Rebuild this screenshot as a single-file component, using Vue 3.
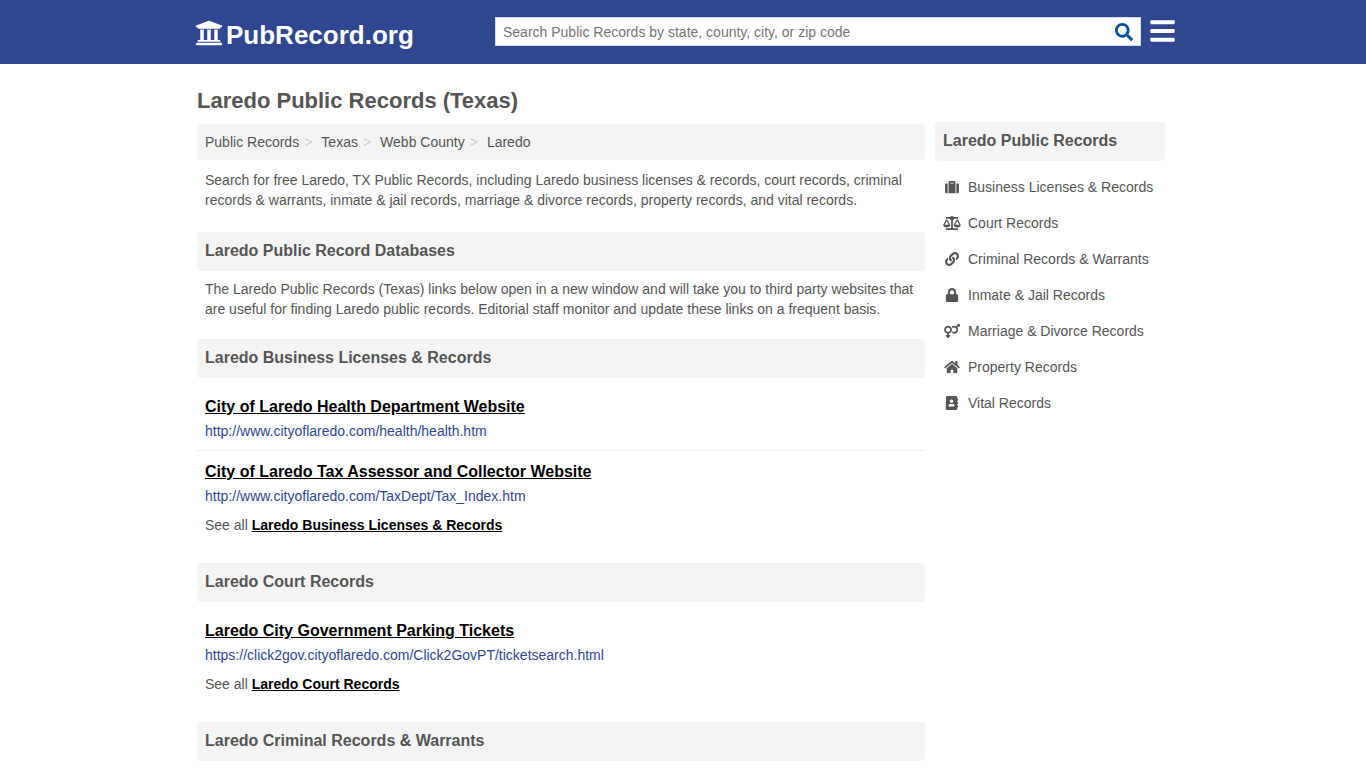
<script setup>
const crumbs = ['Public Records', 'Texas', 'Webb County', 'Laredo']

const sections = [
  {
    title: 'Laredo Business Licenses & Records',
    items: [
      { name: 'City of Laredo Health Department Website', url: 'http://www.cityoflaredo.com/health/health.htm' },
      { name: 'City of Laredo Tax Assessor and Collector Website', url: 'http://www.cityoflaredo.com/TaxDept/Tax_Index.htm' },
    ],
  },
  {
    title: 'Laredo Court Records',
    items: [
      { name: 'Laredo City Government Parking Tickets', url: 'https://click2gov.cityoflaredo.com/Click2GovPT/ticketsearch.html' },
    ],
  },
]

const categories = [
  {
    label: 'Business Licenses & Records',
    w: 512,
    d: 'M128 480h256V80c0-26.5-21.5-48-48-48H176c-26.5 0-48 21.5-48 48v400zm64-384h128v32H192V96zm320 80v256c0 26.5-21.5 48-48 48h-48V128h48c26.5 0 48 21.5 48 48zM96 480H48c-26.5 0-48-21.5-48-48V176c0-26.5 21.5-48 48-48h48v352z',
  },
  {
    label: 'Court Records',
    w: 640,
    d: 'M256 336h-.02c0-16.18 1.34-8.73-85.05-181.51-17.65-35.29-68.19-35.36-85.87 0C-2.06 328.75.02 320.33.02 336H0c0 44.18 57.31 80 128 80s128-35.82 128-80zM128 176l72 144H56l72-144zm511.98 160c0-16.18 1.34-8.73-85.05-181.51-17.65-35.29-68.19-35.36-85.87 0-87.12 174.26-85.04 165.84-85.04 181.51H384c0 44.18 57.31 80 128 80s128-35.82 128-80h-.02zM440 320l72-144 72 144H440zm88 128H352V153.25c23.51-10.29 41.16-31.48 46.39-57.25H528c8.84 0 16-7.16 16-16V48c0-8.84-7.16-16-16-16H383.64C369.04 12.68 346.09 0 320 0s-49.04 12.68-63.64 32H112c-8.84 0-16 7.16-16 16v32c0 8.84 7.16 16 16 16h129.61c5.23 25.76 22.87 46.96 46.39 57.25V448H112c-8.84 0-16 7.16-16 16v32c0 8.84 7.16 16 16 16h416c8.84 0 16-7.16 16-16v-32c0-8.84-7.16-16-16-16z',
  },
  {
    label: 'Criminal Records & Warrants',
    w: 512,
    d: 'M326.612 185.391c59.747 59.809 58.927 155.698.36 214.59-.11.12-.24.25-.36.37l-67.2 67.2c-59.27 59.27-155.699 59.262-214.96 0-59.27-59.26-59.27-155.7 0-214.96l37.106-37.106c9.84-9.84 26.786-3.3 27.294 10.606.648 17.722 3.826 35.527 9.69 52.721 1.986 5.822.567 12.262-3.783 16.612l-13.087 13.087c-28.026 28.026-28.905 73.66-1.155 101.96 28.024 28.579 74.086 28.749 102.325.51l67.2-67.19c28.191-28.191 28.073-73.757 0-101.83-3.701-3.694-7.429-6.564-10.341-8.569a16.037 16.037 0 0 1-6.947-12.606c-.396-10.567 3.348-21.456 11.698-29.806l21.054-21.055c5.521-5.521 14.182-6.199 20.584-1.731a152.482 152.482 0 0 1 20.522 17.197zM467.547 44.449c-59.261-59.262-155.69-59.27-214.96 0l-67.2 67.2c-.12.12-.25.25-.36.37-58.566 58.892-59.387 154.781.36 214.59a152.454 152.454 0 0 0 20.521 17.196c6.402 4.468 15.064 3.789 20.584-1.731l21.054-21.055c8.35-8.35 12.094-19.239 11.698-29.806a16.037 16.037 0 0 0-6.947-12.606c-2.912-2.005-6.64-4.875-10.341-8.569-28.073-28.073-28.191-73.639 0-101.83l67.2-67.19c28.239-28.239 74.3-28.069 102.325.51 27.75 28.3 26.872 73.934-1.155 101.96l-13.087 13.087c-4.35 4.35-5.769 10.79-3.783 16.612 5.864 17.194 9.042 34.999 9.69 52.721.509 13.906 17.454 20.446 27.294 10.606l37.106-37.106c59.271-59.259 59.271-155.699.001-214.959z',
  },
  {
    label: 'Inmate & Jail Records',
    w: 448,
    d: 'M400 224h-24v-72C376 68.2 307.8 0 224 0S72 68.2 72 152v72H48c-26.5 0-48 21.5-48 48v192c0 26.5 21.5 48 48 48h352c26.5 0 48-21.5 48-48V272c0-26.5-21.5-48-48-48zm-104 0H152v-72c0-39.7 32.3-72 72-72s72 32.3 72 72v72z',
  },
  {
    label: 'Marriage & Divorce Records',
    w: 576,
    d: 'M564 0h-79c-10.7 0-16 12.9-8.5 20.5l16.9 16.9-48.7 48.7C422.5 72.1 396.2 64 368 64c-33.7 0-64.6 11.6-89.2 30.9 14 16.7 25 36 32.1 57.1 14.5-14.8 34.7-24 57.1-24 44.1 0 80 35.9 80 80s-35.9 80-80 80c-22.3 0-42.6-9.2-57.1-24-7.1 21.1-18 40.4-32.1 57.1 24.5 19.4 55.5 30.9 89.2 30.9 79.5 0 144-64.5 144-144 0-28.2-8.1-54.5-22.1-76.7l48.7-48.7 16.9 16.9c2.4 2.4 5.4 3.5 8.4 3.5 6.2 0 12.1-4.8 12.1-12V12c0-6.6-5.4-12-12-12zM144 64C64.5 64 0 128.5 0 208c0 68.5 47.9 125.9 112 140.4V400H76c-6.6 0-12 5.4-12 12v40c0 6.6 5.4 12 12 12h36v36c0 6.6 5.4 12 12 12h40c6.6 0 12-5.4 12-12v-36h36c6.6 0 12-5.4 12-12v-40c0-6.6-5.4-12-12-12h-36v-51.6c64.1-14.6 112-71.9 112-140.4 0-79.5-64.5-144-144-144zm0 224c-44.1 0-80-35.9-80-80s35.9-80 80-80 80 35.9 80 80-35.9 80-80 80z',
  },
  {
    label: 'Property Records',
    w: 576,
    d: 'M280.37 148.26L96 300.11V464a16 16 0 0 0 16 16l112.06-.29a16 16 0 0 0 15.92-16V368a16 16 0 0 1 16-16h64a16 16 0 0 1 16 16v95.64a16 16 0 0 0 16 16.05L464 480a16 16 0 0 0 16-16V300L295.67 148.26a12.19 12.19 0 0 0-15.3 0zM571.6 251.47L488 182.56V44.05a12 12 0 0 0-12-12h-56a12 12 0 0 0-12 12v72.61L318.47 43a48 48 0 0 0-61 0L4.34 251.47a12 12 0 0 0-1.6 16.9l25.5 31A12 12 0 0 0 45.15 301l235.22-193.74a12.19 12.19 0 0 1 15.3 0L530.9 301a12 12 0 0 0 16.9-1.6l25.5-31a12 12 0 0 0-1.7-16.93z',
  },
  {
    label: 'Vital Records',
    w: 448,
    d: 'M436 160c6.6 0 12-5.4 12-12v-40c0-6.6-5.4-12-12-12h-20V48c0-26.5-21.5-48-48-48H48C21.5 0 0 21.5 0 48v416c0 26.5 21.5 48 48 48h320c26.5 0 48-21.5 48-48v-48h20c6.6 0 12-5.4 12-12v-40c0-6.6-5.4-12-12-12h-20v-64h20c6.6 0 12-5.4 12-12v-40c0-6.6-5.4-12-12-12h-20v-64h20zm-228-32c35.3 0 64 28.7 64 64s-28.7 64-64 64-64-28.7-64-64 28.7-64 64-64zm112 236.8c0 10.6-10 19.2-22.4 19.2H118.4C106 384 96 375.4 96 364.8v-19.2c0-31.8 30.1-57.6 67.2-57.6h5c12.3 5.1 25.7 8 39.8 8s27.6-2.9 39.8-8h5c37.1 0 67.2 25.8 67.2 57.6v19.2z',
  },
]
</script>

<template>
  <div class="page">
    <header class="site-header">
      <div class="header-inner">
        <a class="logo" href="#">
          <svg class="logo-icon" viewBox="0 0 512 512" aria-hidden="true">
            <path d="M496 128v16a8 8 0 0 1-8 8h-24v12c0 6.627-5.373 12-12 12H60c-6.627 0-12-5.373-12-12v-12H24a8 8 0 0 1-8-8v-16a8 8 0 0 1 4.941-7.392l232-88a7.996 7.996 0 0 1 6.118 0l232 88A8 8 0 0 1 496 128zm-24 304H40c-13.255 0-24 10.745-24 24v16a8 8 0 0 0 8 8h464a8 8 0 0 0 8-8v-16c0-13.255-10.745-24-24-24zM96 192v192H60c-6.627 0-12 5.373-12 12v20h416v-20c0-6.627-5.373-12-12-12h-36V192h-64v192h-64V192h-64v192h-64V192H96z" />
          </svg>
          <span>PubRecord.org</span>
        </a>
        <form class="search" role="search" @submit.prevent>
          <input type="text" aria-label="Search Public Records" placeholder="Search Public Records by state, county, city, or zip code" />
          <button type="submit" aria-label="Search">
            <svg viewBox="0 0 512 512" aria-hidden="true">
              <path d="M505 442.7L405.3 343c-4.5-4.5-10.6-7-17-7H372c27.6-35.3 44-79.7 44-128C416 93.1 322.9 0 208 0S0 93.1 0 208s93.1 208 208 208c48.3 0 92.7-16.4 128-44v16.3c0 6.4 2.5 12.5 7 17l99.7 99.7c9.4 9.4 24.6 9.4 33.9 0l28.3-28.3c9.4-9.4 9.4-24.6.1-34zM208 336c-70.7 0-128-57.2-128-128 0-70.7 57.2-128 128-128 70.7 0 128 57.2 128 128 0 70.7-57.2 128-128 128z" />
            </svg>
          </button>
        </form>
        <button class="menu" type="button" aria-label="Menu">
          <svg viewBox="0 0 448 512" aria-hidden="true">
            <path d="M16 132h416c8.837 0 16-7.163 16-16V76c0-8.837-7.163-16-16-16H16C7.163 60 0 67.163 0 76v40c0 8.837 7.163 16 16 16zm0 160h416c8.837 0 16-7.163 16-16v-40c0-8.837-7.163-16-16-16H16c-8.837 0-16 7.163-16 16v40c0 8.837 7.163 16 16 16zm0 160h416c8.837 0 16-7.163 16-16v-40c0-8.837-7.163-16-16-16H16c-8.837 0-16 7.163-16 16v40c0 8.837 7.163 16 16 16z" />
          </svg>
        </button>
      </div>
    </header>

    <div class="columns">
      <main class="content">
        <h1>Laredo Public Records (Texas)</h1>
        <nav aria-label="Breadcrumb">
          <ol class="crumbs">
            <li v-for="c in crumbs" :key="c"><a href="#">{{ c }}</a></li>
          </ol>
        </nav>
        <p>Search for free Laredo, TX Public Records, including Laredo business licenses &amp; records, court records, criminal records &amp; warrants, inmate &amp; jail records, marriage &amp; divorce records, property records, and vital records.</p>
        <h2 class="bar">Laredo Public Record Databases</h2>
        <p class="note">The Laredo Public Records (Texas) links below open in a new window and will take you to third party websites that are useful for finding Laredo public records. Editorial staff monitor and update these links on a frequent basis.</p>

        <section v-for="s in sections" :key="s.title">
          <h2 class="bar">{{ s.title }}</h2>
          <ul class="records">
            <li v-for="item in s.items" :key="item.url">
              <a class="record-name" href="#">{{ item.name }}</a>
              <span class="record-url">{{ item.url }}</span>
            </li>
          </ul>
          <div class="see-all">See all <a href="#">{{ s.title }}</a></div>
        </section>

        <h2 class="bar">Laredo Criminal Records &amp; Warrants</h2>
      </main>

      <aside class="sidebar">
        <h2 class="bar">Laredo Public Records</h2>
        <ul class="categories">
          <li v-for="c in categories" :key="c.label">
            <a href="#">
              <svg :viewBox="`0 0 ${c.w} 512`" aria-hidden="true"><path :d="c.d" /></svg>
              <span>{{ c.label }}</span>
            </a>
          </li>
        </ul>
      </aside>
    </div>
  </div>
</template>

<style>
body {
  margin: 0;
  background: #fff;
}
</style>

<style scoped>
.page {
  font-family: "Liberation Sans", Arial, sans-serif;
  font-size: 14px;
  line-height: 20px;
  color: #555;
}
.page * {
  box-sizing: border-box;
}
svg {
  display: block;
  fill: currentColor;
}
a {
  color: inherit;
  text-decoration: none;
}
ul,
ol {
  list-style: none;
  margin: 0;
  padding: 0;
}
button {
  border: 0;
  padding: 0;
  background: none;
  cursor: pointer;
}
.site-header {
  background: #2e4790;
}
.header-inner {
  display: flex;
  align-items: center;
  justify-content: space-between;
  max-width: 984px;
  min-height: 64px;
  margin: 0 auto;
  padding: 0 0 2px 4px;
}
.logo {
  display: flex;
  align-items: center;
  gap: 3px;
  color: #fff;
  font-size: 26px;
  font-weight: bold;
  line-height: 32px;
  padding-top: 4px;
}
.logo span {
  padding-top: 4px;
}
.logo-icon {
  width: 28px;
  height: 28px;
}
.search {
  display: flex;
  flex: 0 1 646px;
  height: 29px;
  margin: 0 9px 0 auto;
  background: #fff;
  border: 1px solid #cfe0f5;
}
.search input {
  flex: 1;
  min-width: 0;
  border: 0;
  outline: 0;
  padding: 2px 8px 0 7px;
  background: none;
  font: inherit;
  color: #555;
}
.search input::placeholder {
  color: #757575;
}
.search button {
  padding: 2px 7px 0;
  color: #0a53a0;
}
.search svg {
  width: 18px;
  height: 18px;
}
.menu {
  color: #fff;
}
.menu svg {
  width: 25px;
  height: 28px;
}
.columns {
  display: flex;
  gap: 10px;
  max-width: 972px;
  margin: 0 auto;
  padding-right: 4px;
}
.content {
  flex: 1;
  min-width: 0;
}
.sidebar {
  flex: 0 0 230px;
  padding-top: 58px;
}
h1 {
  margin: 24px 0 10px;
  font-size: 22px;
  line-height: 26px;
}
.crumbs {
  display: flex;
  padding: 8px;
  background: #f4f4f4;
  border-radius: 4px;
}
.crumbs li + li::before {
  content: ">";
  padding: 0 9px 0 5px;
  color: #ccc;
}
p {
  margin: 10px 0 22px;
  padding: 0 8px;
}
.note {
  margin: 8px 0 20px;
}
.bar {
  margin: 0;
  padding: 8px 8px 9px;
  background: #f4f4f4;
  border-radius: 4px;
  font-size: 16px;
  line-height: 22px;
}
.records {
  padding-top: 8px;
}
.records li {
  display: flex;
  flex-direction: column;
  align-items: flex-start;
  gap: 3px;
  padding: 10px 8px 9px;
}
.records li + li {
  border-top: 1px solid #eee;
}
.record-name {
  font-size: 16px;
  line-height: 22px;
  font-weight: bold;
  color: #000;
  text-decoration: underline;
}
.record-url {
  color: #2e4790;
}
.see-all {
  margin-bottom: 28px;
  padding: 0 8px;
}
.see-all a {
  font-weight: bold;
  color: #000;
  text-decoration: underline;
}
.categories {
  padding: 8px;
}
.categories a {
  display: flex;
  align-items: center;
  gap: 7px;
  padding: 8px 0;
}
.categories svg {
  width: 18px;
  height: 14px;
}
</style>
